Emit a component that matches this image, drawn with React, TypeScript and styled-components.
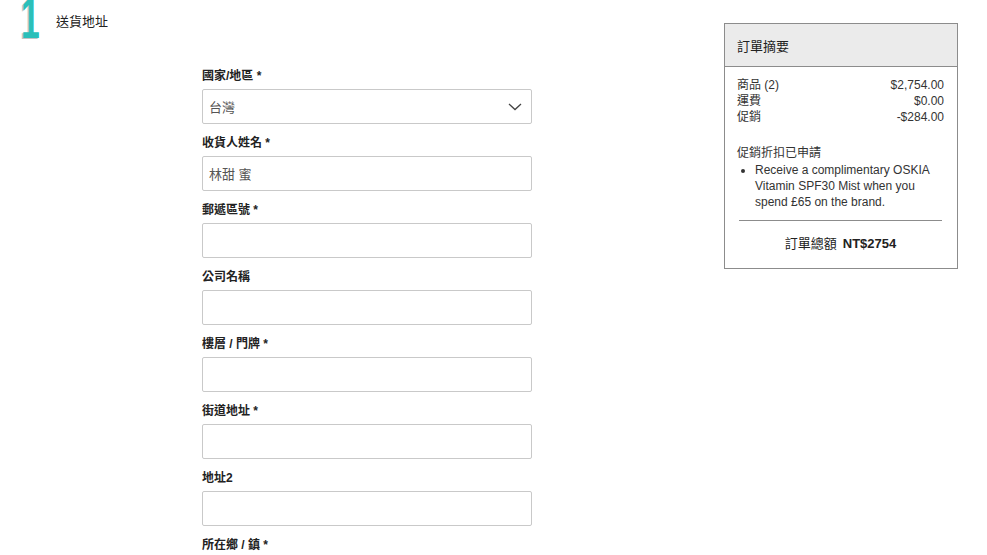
import React from "react";
import styled, { createGlobalStyle } from "styled-components";

const Global = createGlobalStyle`
  html, body { margin: 0; padding: 0; background: #fff; }
  body {
    font-family: "Liberation Sans", Arial, "Noto Sans CJK TC", sans-serif;
    color: #222;
  }
  * { box-sizing: border-box; }
`;

const Page = styled.div`
  display: grid;
  grid-template-columns: 202px 330px 1fr 234px;
  grid-template-rows: 68px auto;
  width: 987px;
  padding-right: 29px;
`;

const StepHeader = styled.div`
  grid-column: 1 / 4;
  grid-row: 1;
  display: flex;
  align-items: flex-start;
  padding-left: 21px;
`;

const StepNumber = styled.div`
  width: 35px;
  font-family: "Liberation Sans", Arial, sans-serif;
  font-weight: 700;
  font-size: 58px;
  line-height: 62px;
  margin-top: -13px;
  color: #2bbfb9;
  text-shadow: -2px 1px 0 #c4c4c4;
  transform: scaleX(0.58);
  transform-origin: left top;
`;

const StepTitle = styled.div`
  font-size: 13px;
  line-height: 16px;
  margin-top: 14px;
  color: #222;
`;

const Form = styled.div`
  grid-column: 2;
  grid-row: 2;
  display: flex;
  flex-direction: column;
`;

const Field = styled.div`
  display: flex;
  flex-direction: column;
  margin-bottom: 11px;
`;

const Label = styled.label`
  font-size: 12px;
  line-height: 16px;
  font-weight: 700;
  color: #222;
  margin-bottom: 5px;
`;

const InputBox = styled.div`
  position: relative;
  height: 35px;
  border: 1px solid #c9c9c9;
  border-radius: 2px;
  display: flex;
  align-items: center;
  padding: 0 6px;
  font-size: 13px;
  color: #555;
  background: #fff;
`;

const Chevron = styled.svg`
  position: absolute;
  right: 9px;
  top: 13px;
`;

const Summary = styled.aside`
  grid-column: 4;
  grid-row: 1 / 3;
  margin-top: 23px;
  align-self: start;
  border: 1px solid #8c8c8c;
  font-size: 12px;
  color: #333;
`;

const SummaryHead = styled.div`
  height: 43px;
  background: #ebebeb;
  border-bottom: 1px solid #8c8c8c;
  display: flex;
  align-items: center;
  padding: 0 12px;
  font-size: 13px;
  color: #222;
`;

const SummaryBody = styled.div`
  padding: 10px 13px 16px 12px;
`;

const Row = styled.div`
  display: flex;
  justify-content: space-between;
  line-height: 16px;
`;

const PromoTitle = styled.div`
  margin-top: 20px;
  line-height: 16px;
`;

const PromoList = styled.ul`
  margin: 1px 0 0 0;
  padding-left: 18px;
  line-height: 16px;
`;

const Divider = styled.hr`
  border: 0;
  border-top: 1px solid #8c8c8c;
  margin: 10px 2px 15px 2px;
`;

const Total = styled.div`
  text-align: center;
  font-size: 13px;
  line-height: 16px;
  color: #222;
  b { margin-left: 6px; }
`;

const fields: { label: string; value?: string; select?: boolean }[] = [
  { label: "國家/地區 *", value: "台灣", select: true },
  { label: "收貨人姓名 *", value: "林甜 蜜" },
  { label: "郵遞區號 *" },
  { label: "公司名稱" },
  { label: "樓層 / 門牌 *" },
  { label: "街道地址 *" },
  { label: "地址2" },
  { label: "所在鄉 / 鎮 *" },
];

export default function App() {
  return (
    <>
      <Global />
      <Page>
        <StepHeader>
          <StepNumber>1</StepNumber>
          <StepTitle>送貨地址</StepTitle>
        </StepHeader>
        <Form>
          {fields.map((f) => (
            <Field key={f.label}>
              <Label>{f.label}</Label>
              <InputBox>
                {f.value}
                {f.select && (
                  <Chevron width="14" height="8" viewBox="0 0 14 8">
                    <path d="M1 1 L7 6.5 L13 1" fill="none" stroke="#444" strokeWidth="1.3" />
                  </Chevron>
                )}
              </InputBox>
            </Field>
          ))}
        </Form>
        <Summary>
          <SummaryHead>訂單摘要</SummaryHead>
          <SummaryBody>
            <Row><span>商品 (2)</span><span>$2,754.00</span></Row>
            <Row><span>運費</span><span>$0.00</span></Row>
            <Row><span>促銷</span><span>-$284.00</span></Row>
            <PromoTitle>促銷折扣已申請</PromoTitle>
            <PromoList>
              <li>Receive a complimentary OSKIA Vitamin SPF30 Mist when you spend £65 on the brand.</li>
            </PromoList>
            <Divider />
            <Total>訂單總額<b>NT$2754</b></Total>
          </SummaryBody>
        </Summary>
      </Page>
    </>
  );
}
